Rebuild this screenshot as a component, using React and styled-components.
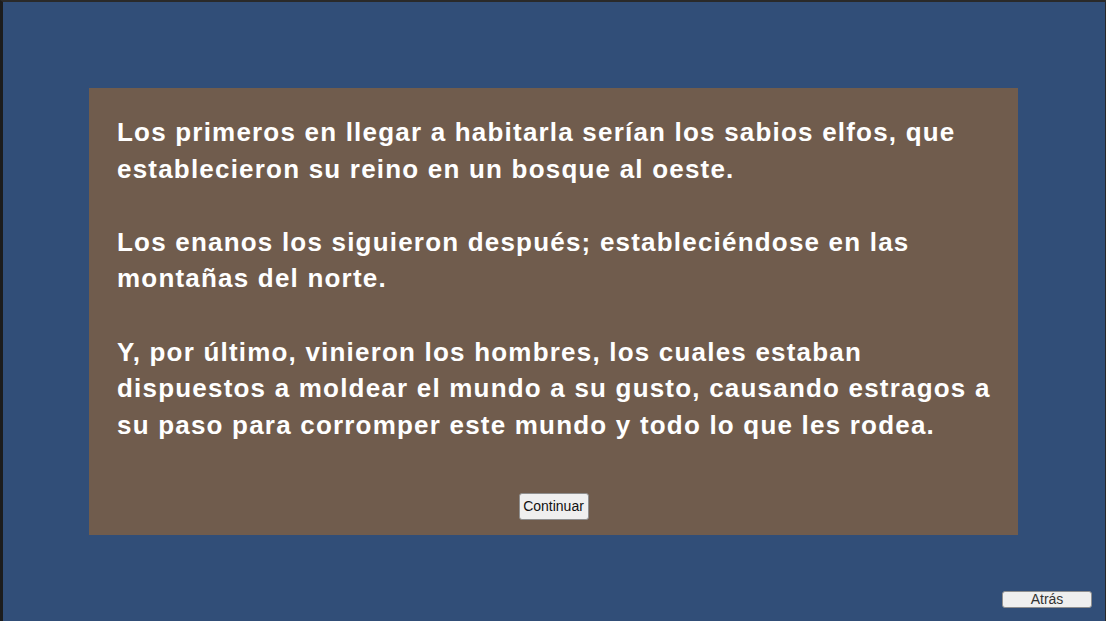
import React from "react";
import styled, { createGlobalStyle } from "styled-components";

const Global = createGlobalStyle`
  html, body { margin: 0; padding: 0; background: #314e78; }
  body { font-family: "Liberation Sans", Arial, sans-serif; }
`;

const Screen = styled.div`
  position: relative;
  box-sizing: border-box;
  width: 1106px;
  height: 621px;
  background: #314e78;
  border-top: 2px solid #2a2a2a;
  border-left: 3px solid #1c1c1c;
  border-right: 1px solid #2a2a2a;
  padding: 86px 87px 86px 86px;
  display: flex;
`;

const Panel = styled.div`
  flex: 1;
  background: #705c4d;
  padding: 26px 24px 15px 28px;
  display: flex;
  flex-direction: column;
  align-items: stretch;
`;

const Story = styled.div`
  color: #ffffff;
  font-family: "Liberation Sans", Arial, sans-serif;
  font-weight: bold;
  font-size: 26px;
  line-height: 36.6px;
  letter-spacing: 1.2px;
`;

const Para = styled.p`
  margin: 0 0 36.6px 0;
  &:last-child { margin-bottom: 0; }
`;

const Footer = styled.div`
  margin-top: auto;
  padding-right: 4px;
  display: flex;
  justify-content: center;
`;

const Button = styled.button`
  font-family: "Liberation Sans", Arial, sans-serif;
  font-size: ${(p) => p.$size || 14}px;
  color: ${(p) => p.$color || "#111"};
  background: #efefef;
  border: 1px solid #8f8f8f;
  border-radius: 3px;
  padding: 0;
  width: ${(p) => p.$w}px;
  height: ${(p) => p.$h}px;
  line-height: ${(p) => p.$h - 2}px;
  cursor: pointer;
`;

const BackSlot = styled.div`
  position: absolute;
  right: 13px;
  bottom: 13px;
`;

export default function App() {
  return (
    <>
      <Global />
      <Screen>
        <Panel>
          <Story>
            <Para>
              Los primeros en llegar a habitarla serían los sabios elfos, que
              establecieron su reino en un bosque al oeste.
            </Para>
            <Para>
              Los enanos los siguieron después; estableciéndose en las
              montañas del norte.
            </Para>
            <Para>
              Y, por último, vinieron los hombres, los cuales estaban
              dispuestos a moldear el mundo a su gusto, causando estragos a
              su paso para corromper este mundo y todo lo que les rodea.
            </Para>
          </Story>
          <Footer>
            <Button $w={70} $h={27} $size={14}>Continuar</Button>
          </Footer>
        </Panel>
        <BackSlot>
          <Button $w={90} $h={17} $size={14} $color="#333">Atrás</Button>
        </BackSlot>
      </Screen>
    </>
  );
}
